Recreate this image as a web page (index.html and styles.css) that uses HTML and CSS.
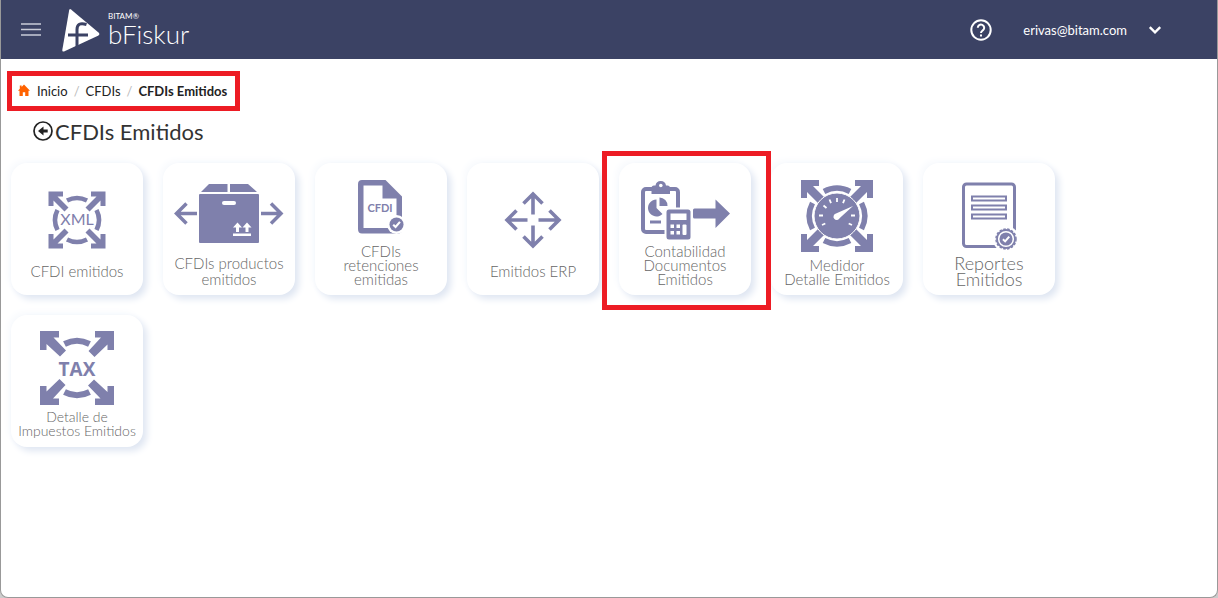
FILE: index.html
```html
<!DOCTYPE html>
<html lang="es">
<head>
    <meta charset="UTF-8">
    <meta name="viewport" content="width=device-width, initial-scale=1.0">
    <title>bFiskur - CFDIs Emitidos</title>
    <link rel="stylesheet" href="styles.css">
</head>
<body>

<div class="window">
    <header class="navbar">
        <button class="icon-button menu-button" type="button" aria-label="Menú">
            <svg width="20" height="16" viewBox="0 0 20 16"><path d="M0 2h20M0 7.500h20M0 13h20" stroke="#c9ccd8" stroke-width="1.600"/></svg>
        </button>
        <a class="logo" href="#" aria-label="BITAM bFiskur">
            <svg width="40" height="46" viewBox="0 0 40 46">
                <path d="M10 2.500 L37.500 25.500 Q39.500 27.500 37 28.800 L3 44.500 Q1 45 1.300 43 L8.200 3 Q8.800 1.500 10 2.500Z" fill="#fff"/>
                <path d="M16 42 V22.500 Q16 14.500 25.500 17.500 M7 28 H27" fill="none" stroke="#3b4264" stroke-width="3"/>
            </svg>
            <span class="logo-text">
                <span class="logo-brand">BITAM®</span>
                <span class="logo-name">bFiskur</span>
            </span>
        </a>
        <div class="account">
            <button class="icon-button" type="button" aria-label="Ayuda">
                <svg width="22" height="22" viewBox="0 0 22 22" fill="none" stroke="#fff" stroke-width="2">
                    <circle cx="11" cy="11" r="9.700"/>
                    <path d="M7.800 8.800a3.200 3.200 0 1 1 5.400 2.300C12 12.200 11 12.500 11 14"/>
                    <path d="M11 15.500v2"/>
                </svg>
            </button>
            <button class="icon-button user-button" type="button">
                <span>erivas@bitam.com</span>
                <svg width="14" height="10" viewBox="0 0 14 10"><path d="M1.800 2.200L7 7.400l5.200-5.200" fill="none" stroke="#fff" stroke-width="2.400"/></svg>
            </button>
        </div>
    </header>

    <main class="content">
        <nav class="breadcrumb" aria-label="Ruta">
            <a class="home" href="#">
                <svg width="12" height="14" viewBox="0 0 12 14"><path d="M6 0.500L12 6.700H10.500V12H7.200V8.300H4.800V12H1.500V6.700H0L1.800 4.800V1.500H3.600V3z" fill="#ff6200"/></svg>
                Inicio</a>
            <span class="slash">/</span>
            <a href="#">CFDIs</a>
            <span class="slash">/</span>
            <span class="current">CFDIs Emitidos</span>
        </nav>

        <h1 class="title">
            <a href="#" aria-label="Regresar">
                <svg width="20" height="22" viewBox="0 0 20 22">
                    <circle cx="10" cy="10" r="9" fill="none" stroke="#222" stroke-width="1.700"/>
                    <path d="M5 10L10.500 5.500V8.500h4.200v3h-4.200v3z" fill="#222"/>
                </svg>
            </a>
            <span>CFDIs Emitidos</span>
        </h1>

        <!-- pieces shared by the tile icons -->
        <svg class="symbols" aria-hidden="true">
            <symbol id="check" viewBox="0 0 16 16">
                <circle cx="8" cy="8" r="7.500" fill="#7f80ac"/>
                <path d="M4.500 8.300L7 10.700L11.700 5.200" fill="none" stroke="#fff" stroke-width="2.300"/>
            </symbol>
        </svg>

        <div class="tiles">
            <a class="tile single" href="#">
                <svg width="58" height="58" viewBox="0 0 58 58">
                    <path id="corner" d="M0.500 0.500H15V5.500H9.500L20.500 16.500L16.500 20.500L5.500 9.500V15H0.500Z"/>
                    <use href="#corner" transform="rotate(90 29 29)"/>
                    <use href="#corner" transform="rotate(180 29 29)"/>
                    <use href="#corner" transform="rotate(270 29 29)"/>
                    <path class="line" stroke-width="4.600" d="M19 9.500A22 22 0 0 1 39 9.500M48.500 19A22 22 0 0 1 48.500 39M39 48.500A22 22 0 0 1 19 48.500M9.500 39A22 22 0 0 1 9.500 19"/>
                    <text class="xml" x="29" y="34">XML</text>
                </svg>
                <span class="label">CFDI emitidos</span>
            </a>

            <a class="tile loose" href="#">
                <svg width="110" height="67" viewBox="0 0 110 67">
                    <path d="M27 8L35 0H53.500V8ZM56 0H74L83 8H56Z"/>
                    <rect x="25" y="10" width="60" height="49" rx="1"/>
                    <rect x="48" y="17" width="14" height="4" rx="2" fill="#fff"/>
                    <path d="M59 49.500H77V52H59ZM63.500 38.500L68 43.500H65V48H62V43.500H59ZM73 38.500L77.500 43.500H74.500V48H71.500V43.500H68.500Z" fill="#fff"/>
                    <path class="line" stroke-width="3.500" d="M23 29.500H2M12.500 19.500L2.500 29.500L12.500 39.500M87 29.500H107M97 19.500L107 29.500L97 39.500"/>
                </svg>
                <span class="label">CFDIs productos<br>emitidos</span>
            </a>

            <a class="tile" href="#">
                <svg width="46" height="60" viewBox="0 0 46 60">
                    <path fill-rule="evenodd" d="M4 0H27.500L44 16.500V49Q44 53.500 40 53.500H4Q0 53.500 0 49V4Q0 0 4 0ZM5.500 5.500V48H38.500V18.500H24.500V5.500Z"/>
                    <text class="cfdi" x="22" y="32">CFDI</text>
                    <circle cx="38.500" cy="44.500" r="9.500" fill="#fff"/>
                    <use href="#check" x="31" y="37" width="15" height="15"/>
                </svg>
                <span class="label">CFDIs<br>retenciones<br>emitidas</span>
            </a>

            <a class="tile single" href="#">
                <svg width="58" height="58" viewBox="0 0 58 58">
                    <path class="line" stroke-width="3.600" d="M29 23.500V3M19.500 12.500L29 3L38.500 12.500M29 34.500V55M19.500 45.500L29 55L38.500 45.500M23.500 29H3M12.500 19.500L3 29L12.500 38.500M34.500 29H55M45.500 19.500L55 29L45.500 38.500"/>
                </svg>
                <span class="label">Emitidos ERP</span>
            </a>

            <a class="tile marked" href="#">
                <svg width="90" height="60" viewBox="0 0 90 60">
                    <rect class="line" x="3" y="9" width="35" height="43" rx="3" stroke-width="4"/>
                    <path d="M11.500 14V8Q11.500 5.500 14 5.500H15.500A5.300 5.300 0 0 1 26 5.500H27.500Q30 5.500 30 8V14Z"/>
                    <circle cx="20.800" cy="5.500" r="1.800" fill="#fff"/>
                    <path d="M16.500 19.500V28L22.500 34A8.500 8.500 0 1 1 16.500 19.500ZM19.500 17.500A8 8 0 0 1 27.500 26H19.500Z"/>
                    <path class="line" stroke-width="3" d="M10 42H21"/>
                    <rect x="24.500" y="27.500" width="28" height="34" fill="#fff"/>
                    <rect x="26.500" y="29.500" width="24" height="30" rx="2.500"/>
                    <path fill="#fff" d="M30.500 33.500H46.500V40H30.500ZM30.500 44.500h3.500v3.500h-3.500zM36.500 44.500h3.500v3.500h-3.500zM30.500 51h3.500v3.500h-3.500zM36.500 51h3.500v3.500h-3.500z"/>
                    <rect x="42.500" y="44.500" width="4" height="10.500" rx="1" fill="#fff"/>
                    <path d="M54.500 28.500H75.500V19.500L90 33.500L75.500 48V38.500H54.500Q53 38.500 53 37V30Q53 28.500 54.500 28.500Z"/>
                </svg>
                <span class="label">Contabilidad<br>Documentos<br>Emitidos</span>
            </a>

            <a class="tile" href="#">
                <svg width="74" height="75" viewBox="0 0 74 75">
                    <path id="arrow" d="M1 1H19V7H13L27 21L21 27L7 13V19H1Z"/>
                    <use href="#arrow" transform="rotate(90 37 37)"/>
                    <use href="#arrow" transform="rotate(180 37 37)"/>
                    <use href="#arrow" transform="rotate(270 37 37)"/>
                    <path class="line" stroke-width="5.500" d="M24 12.500A28 28 0 0 1 50 12.500M61.500 24A28 28 0 0 1 61.500 50M50 61.500A28 28 0 0 1 24 61.500M12.500 50A28 28 0 0 1 12.500 24"/>
                    <circle cx="37" cy="37" r="23" stroke="#fff" stroke-width="1"/>
                    <path fill="none" stroke="#fff" stroke-width="1.800" d="M37 19v4M29.500 20.500l1.500 3.700M44.500 20.500L43 24.200M23.500 26.500l3 2.500M19 36.500h4M51 36.500h4M22 46l3.300-1.500M52 46l-3.300-1.500"/>
                    <path fill="#fff" d="M53 27L39.800 39A3.300 3.300 0 1 1 36 34.500Z"/>
                </svg>
                <span class="label">Medidor<br>Detalle Emitidos</span>
            </a>

            <a class="tile loose wide" href="#">
                <svg width="56" height="69" viewBox="0 0 56 69">
                    <rect class="line" x="2.500" y="2" width="51" height="62.500" rx="3" stroke-width="3"/>
                    <path class="line" stroke-width="2" d="M11 14.500H45V18.500H11ZM11 23.500H45V27.500H11ZM11 32.500H45V36.500H11Z"/>
                    <circle cx="45" cy="57" r="13" fill="#fff"/>
                    <circle class="line" cx="45" cy="57" r="9" stroke-width="1.800"/>
                    <circle class="line" cx="45" cy="57" r="10" stroke-width="1.500" stroke-dasharray="2.500 1.500"/>
                    <use href="#check" x="38" y="50" width="14" height="14"/>
                </svg>
                <span class="label">Reportes<br>Emitidos</span>
            </a>

            <a class="tile narrow" href="#">
                <svg width="76" height="76" viewBox="0 0 76 76">
                    <path id="bold-arrow" d="M1 1H20V7.500H14.500L27 20.500L21 26.500L7.500 14V20H1Z"/>
                    <use href="#bold-arrow" transform="rotate(90 38 38)"/>
                    <use href="#bold-arrow" transform="rotate(180 38 38)"/>
                    <use href="#bold-arrow" transform="rotate(270 38 38)"/>
                    <path class="line" stroke-width="6" d="M25.500 14A27 27 0 0 1 50.500 14M50.500 62A27 27 0 0 1 25.500 62"/>
                    <text class="tax" x="38" y="46">TAX</text>
                </svg>
                <span class="label">Detalle de<br>Impuestos Emitidos</span>
            </a>
        </div>
    </main>
</div>

</body>
</html>
```
FILE: styles.css
```css
* {
    box-sizing: border-box;
}
body {
    margin: 0;
    font-family: Lato, "Open Sans", sans-serif;
    font-size: 13px;
    color: #222;
    background: #ccc;
}
a {
    color: inherit;
    text-decoration: none;
}
svg {
    display: block;
    flex-shrink: 0;
}
.window {
    min-height: 100vh;
    background: #fff;
    border: 1px solid #999;
    border-top: none;
    border-radius: 0 0 8px 8px;
}
.navbar {
    display: flex;
    align-items: center;
    height: 59px;
    padding: 0 55px 0 20px;
    background: #3b4264;
    color: #fff;
}
.icon-button {
    display: flex;
    align-items: center;
    padding: 0;
    border: none;
    background: none;
    color: inherit;
    font: inherit;
    cursor: pointer;
}
.logo {
    display: flex;
    align-items: center;
    gap: 7px;
    margin-left: 20px;
}
.logo-text {
    display: flex;
    flex-direction: column;
}
.logo-brand {
    font-size: 8px;
    line-height: 9px;
    letter-spacing: 0;
}
.logo-name {
    font-size: 26px;
    line-height: 26px;
    font-weight: 300;
}
.account {
    display: flex;
    align-items: center;
    gap: 31px;
    margin-left: auto;
}
.user-button {
    gap: 21px;
}
.content {
    padding: 12px 6px 24px;
}
.breadcrumb {
    display: flex;
    align-items: center;
    width: fit-content;
    height: 40px;
    padding: 0 8px 0 6px;
    gap: 6px;
    border: 5px solid #ed1c24;
}
.home {
    display: flex;
    align-items: center;
    gap: 7px;
}
.slash {
    color: #bbb;
}
.current {
    font-weight: 700;
}
.title {
    display: flex;
    align-items: center;
    gap: 2px;
    margin: 6px 0 16px 26px;
    font-size: 22px;
    line-height: 30px;
    font-weight: 400;
    color: #333;
}
.symbols {
    width: 0;
    height: 0;
    position: absolute;
}
.tiles {
    display: grid;
    grid-template-columns: repeat(auto-fill, 132px);
    gap: 20px;
    padding: 0 120px 0 4px;
}
.tile {
    display: flex;
    flex-direction: column;
    align-items: center;
    justify-content: flex-end;
    gap: 4px;
    position: relative;
    height: 132px;
    padding-bottom: 9px;
    border-radius: 16px;
    background: #fff;
    box-shadow: 4px 4px 7px #dfe6f2, -3px -3px 7px #f8fafd;
    color: #666;
    fill: #7f80ac;
}
.tile .line {
    fill: none;
    stroke: #7f80ac;
}
.tile text {
    text-anchor: middle;
}
.label {
    font-size: 15px;
    line-height: 14px;
    font-weight: 300;
    text-align: center;
    white-space: nowrap;
}
.single {
    gap: 14px;
    padding-bottom: 16px;
}
.loose {
    padding-bottom: 8px;
}
.loose .label,
.single .label {
    line-height: 16px;
}
.wide .label {
    font-size: 18px;
}
.narrow .label {
    font-size: 14px;
}
.xml {
    font-size: 16px;
}
.cfdi {
    font-size: 11px;
    font-weight: 700;
}
.tax {
    font-family: "Open Sans", sans-serif;
    font-size: 19px;
    font-weight: 700;
}
/* red frame around the selected tile */
.marked::after {
    content: "";
    position: absolute;
    z-index: 1;
    top: -12px;
    right: -20px;
    bottom: -15px;
    left: -17px;
    border: 5px solid #ed1c24;
}
```
